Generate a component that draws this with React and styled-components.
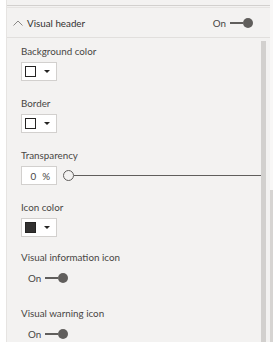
import React from "react";
import styled, { createGlobalStyle } from "styled-components";

const Global = createGlobalStyle`
  html, body { margin: 0; padding: 0; background: #ffffff; }
  body { font-family: "Segoe UI", Lato, "Open Sans", sans-serif; }
`;

const Page = styled.div`
  width: 273px;
  height: 342px;
  display: flex;
  overflow: hidden;
  background: #ffffff;
`;

const Gutter = styled.div`
  width: 6px;
  flex: none;
`;

const Panel = styled.div`
  width: 264px;
  flex: none;
  display: flex;
  flex-direction: column;
  background: #f3f2f1;
  border-left: 1px solid #e6e4e2;
  box-sizing: border-box;
`;

const OuterScroll = styled.div`
  flex: 1;
  display: flex;
  flex-direction: column;
  background: #f8f7f6;
`;

const OuterThumb = styled.div`
  margin-top: ${(p) => p.$top}px;
  flex: 1;
  background: #d6d4d2;
`;

const TopStrip = styled.div`
  height: 5px;
  border-bottom: 1px solid #d2d0ce;
  background: #f3f2f1;
`;

const Header = styled.div`
  margin-top: 1px;
  height: 28px;
  border-top: 1px solid #e6e4e2;
  border-bottom: 1px solid #e1dfdd;
  display: flex;
  align-items: center;
  padding: 1px 17px 0 6px;
  box-sizing: content-box;
  font-size: 9.8px;
  color: #323130;
`;

const Chevron = styled.svg`
  width: 10px;
  height: 6px;
  margin-right: 4px;
`;

const HeaderTitle = styled.span`
  flex: 1;
`;

const Body = styled.div`
  flex: 1;
  display: flex;
  min-height: 0;
`;

const List = styled.div`
  flex: 1;
  padding: 6px 0 0 14px;
  display: flex;
  flex-direction: column;
`;

const InnerScroll = styled.div`
  width: 5px;
  margin: 3px 4px 0 0;
  background: #d2d0ce;
`;

const Field = styled.div`
  display: flex;
  flex-direction: column;
  gap: ${(p) => p.$gap}px;
  margin-bottom: ${(p) => p.$mb}px;
`;

const Label = styled.div`
  font-size: 9.8px;
  line-height: 14px;
  color: #484644;
  white-space: nowrap;
`;

const Picker = styled.div`
  width: 36px;
  height: 19px;
  box-sizing: border-box;
  background: #ffffff;
  border: 1px solid #d2d0ce;
  display: flex;
  align-items: center;
  padding-left: 3px;
`;

const Swatch = styled.div`
  width: 11px;
  height: 11px;
  box-sizing: border-box;
  border: 1px solid #252423;
  background: ${(p) => p.$fill};
`;

const Caret = styled.div`
  margin-left: 8px;
  width: 0;
  height: 0;
  border-left: 3px solid transparent;
  border-right: 3px solid transparent;
  border-top: 3px solid #252423;
`;

const SliderRow = styled.div`
  display: flex;
  align-items: center;
`;

const NumBox = styled.div`
  width: 36px;
  height: 19px;
  box-sizing: border-box;
  background: #ffffff;
  border: 1px solid #d2d0ce;
  display: flex;
  align-items: center;
  justify-content: flex-end;
  padding-right: 6px;
  gap: 6px;
  font-size: 9.8px;
  color: #484644;
`;

const Knob = styled.div`
  width: 11px;
  height: 11px;
  box-sizing: border-box;
  border-radius: 50%;
  border: 1px solid #605e5c;
  margin-left: 6px;
  flex: none;
`;

const Track = styled.div`
  flex: 1;
  height: 1px;
  background: #605e5c;
`;

const Toggle = styled.div`
  display: flex;
  align-items: center;
  padding-left: ${(p) => p.$indent}px;
  font-size: 9.8px;
  line-height: 12px;
  color: #484644;
`;

const ToggleLine = styled.div`
  width: 13px;
  height: 2px;
  background: #605e5c;
  margin-left: 4px;
`;

const ToggleDot = styled.div`
  width: 10px;
  height: 10px;
  border-radius: 50%;
  background: #605e5c;
`;

function ColorPicker({ fill }) {
  return (
    <Picker>
      <Swatch $fill={fill} />
      <Caret />
    </Picker>
  );
}

function OnToggle({ indent = 0 }) {
  return (
    <Toggle $indent={indent}>
      <span>On</span>
      <ToggleLine />
      <ToggleDot />
    </Toggle>
  );
}

export default function App() {
  return (
    <>
      <Global />
      <Page>
        <Gutter />
        <Panel>
          <TopStrip />
          <Header>
            <Chevron viewBox="0 0 10 6">
              <path d="M0.5 5.5 L5 1 L9.5 5.5" fill="none" stroke="#8a8886" strokeWidth="1" />
            </Chevron>
            <HeaderTitle>Visual header</HeaderTitle>
            <OnToggle />
          </Header>
          <Body>
            <List>
              <Field $gap={4} $mb={15}>
                <Label>Background color</Label>
                <ColorPicker fill="#ffffff" />
              </Field>
              <Field $gap={4} $mb={15}>
                <Label>Border</Label>
                <ColorPicker fill="#ffffff" />
              </Field>
              <Field $gap={4} $mb={15}>
                <Label>Transparency</Label>
                <SliderRow>
                  <NumBox>
                    <span>0</span>
                    <span>%</span>
                  </NumBox>
                  <Knob />
                  <Track />
                </SliderRow>
              </Field>
              <Field $gap={4} $mb={13}>
                <Label>Icon color</Label>
                <ColorPicker fill="#323130" />
              </Field>
              <Field $gap={8} $mb={22}>
                <Label>Visual information icon</Label>
                <OnToggle indent={7} />
              </Field>
              <Field $gap={8} $mb={0}>
                <Label>Visual warning icon</Label>
                <OnToggle indent={7} />
              </Field>
            </List>
            <InnerScroll />
          </Body>
        </Panel>
        <OuterScroll>
          <OuterThumb $top={190} />
        </OuterScroll>
      </Page>
    </>
  );
}
